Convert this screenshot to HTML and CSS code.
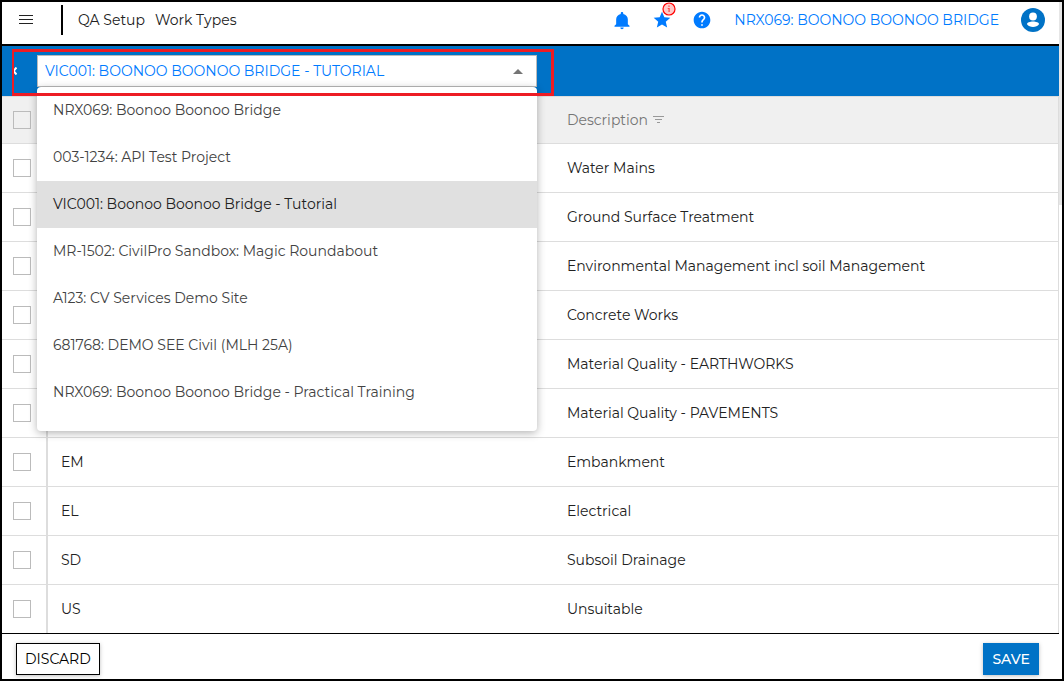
FILE: index.html
```html
<!DOCTYPE html>
<html lang="en">
<head>
    <meta charset="UTF-8">
    <meta name="viewport" content="width=device-width, initial-scale=1.0">
    <title>QA Setup - Work Types</title>
    <link rel="stylesheet" href="styles.css">
</head>
<body>

<div class="app">
    <div class="page">
        <!-- Top bar -->
        <header class="topbar">
            <button type="button" class="icon-btn menu-btn" aria-label="Menu">
                <svg width="14" height="10" viewBox="0 0 14 10" fill="#222" shape-rendering="crispEdges"><path d="M0 0h14v1H0zM0 4h14v1H0zM0 8h14v1H0z"/></svg>
            </button>
            <nav class="breadcrumb">
                <a href="#">QA Setup</a>
                <a href="#">Work Types</a>
            </nav>
            <div class="topbar-right">
                <button type="button" class="icon-btn" aria-label="Notifications">
                    <svg width="20" height="20" viewBox="0 0 24 24" fill="#007bff"><path d="M12 23c1.100 0 2-.9 2-2h-4c0 1.100.9 2 2 2zm7-6v-6c0-3.070-2.130-5.640-5.500-6.320V4c0-.83-.67-1.500-1.500-1.500s-1.500.67-1.500 1.500v.68C7.140 5.360 5 7.920 5 11v6l-2 2v1h18v-1l-2-2z"/></svg>
                </button>
                <button type="button" class="icon-btn" aria-label="Favourites">
                    <svg width="20" height="20" viewBox="0 0 24 24" fill="#007bff"><path d="M12 17.270 18.180 21l-1.640-7.030L22 9.240l-7.190-.61L12 2 9.190 8.630 2 9.240l5.460 4.730L5.820 21z"/></svg>
                    <svg class="badge" width="14" height="14" viewBox="0 0 14 14"><circle cx="7" cy="7" r="6" fill="#ffc9c9" stroke="#f00" stroke-width="1.200"/><path d="M6.300 3.500h1.400v1.300H6.300zM5.700 6h2v4h-1.200V6.900h-.8z" fill="#f44"/></svg>
                </button>
                <button type="button" class="icon-btn" aria-label="Help">
                    <svg width="20" height="20" viewBox="0 0 24 24" fill="#007bff"><path d="M12 2C6.480 2 2 6.480 2 12s4.480 10 10 10 10-4.480 10-10S17.520 2 12 2zm1 17h-2v-2h2v2zm2.070-7.750-.9.920C13.450 12.900 13 13.500 13 15h-2v-.5c0-1.100.45-2.100 1.170-2.830l1.240-1.260c.37-.36.590-.86.590-1.410 0-1.100-.9-2-2-2s-2 .9-2 2H8c0-2.210 1.790-4 4-4s4 1.790 4 4c0 .88-.36 1.680-.93 2.250z"/></svg>
                </button>
                <a href="#" class="project-link">NRX069: BOONOO BOONOO BRIDGE</a>
                <button type="button" class="icon-btn" aria-label="Account">
                    <svg width="24" height="24" viewBox="0 0 24 24"><circle cx="12" cy="12" r="12" fill="#0072c6"/><circle cx="12" cy="8.500" r="3.900" fill="#fff"/><path d="M6 16.300c0-1.800 3-2.700 6-2.700s6 .9 6 2.700c-1.300 1.700-3.500 2.700-6 2.700s-4.700-1-6-2.700z" fill="#fff"/></svg>
                </button>
            </div>
        </header>

        <!-- Project picker -->
        <div class="toolbar">
            <button type="button" class="icon-btn back-btn" aria-label="Back">
                <svg width="5" height="8" viewBox="0 0 5 8" fill="none" stroke="#fff" stroke-width="2"><path d="M4.500.5 1.500 4l3 3.500"/></svg>
            </button>
            <div class="picker">
                <select class="picker-select" aria-label="Project">
                    <option>VIC001: Boonoo Boonoo Bridge - Tutorial</option>
                </select>
                <svg class="picker-arrow" width="10" height="5" viewBox="0 0 10 5" fill="#757575"><path d="M0 5 5 0l5 5z"/></svg>
                <ul class="picker-list">
                    <li>NRX069: Boonoo Boonoo Bridge</li>
                    <li>003-1234: API Test Project</li>
                    <li class="selected">VIC001: Boonoo Boonoo Bridge - Tutorial</li>
                    <li>MR-1502: CivilPro Sandbox: Magic Roundabout</li>
                    <li>A123: CV Services Demo Site</li>
                    <li>681768: DEMO SEE Civil (MLH 25A)</li>
                    <li>NRX069: Boonoo Boonoo Bridge - Practical Training</li>
                </ul>
            </div>
            <div class="highlight"></div>
        </div>

        <!-- Work types -->
        <main class="grid">
            <table class="work-types">
                <colgroup>
                    <col class="col-check">
                    <col class="col-code">
                    <col>
                </colgroup>
                <thead>
                    <tr>
                        <th><input type="checkbox" aria-label="Select all"></th>
                        <th></th>
                        <th>Description <svg class="filter" width="11" height="8" viewBox="0 0 11 8" fill="#999" shape-rendering="crispEdges"><path d="M0 0h11v1H0zM2 3h7v1H2zM4 6h3v1H4z"/></svg></th>
                    </tr>
                </thead>
                <tbody>
                    <tr><td><input type="checkbox" aria-label="Select Water Mains"></td><td></td><td>Water Mains</td></tr>
                    <tr><td><input type="checkbox" aria-label="Select Ground Surface Treatment"></td><td></td><td>Ground Surface Treatment</td></tr>
                    <tr><td><input type="checkbox" aria-label="Select Environmental Management"></td><td></td><td>Environmental Management incl soil Management</td></tr>
                    <tr><td><input type="checkbox" aria-label="Select Concrete Works"></td><td></td><td>Concrete Works</td></tr>
                    <tr><td><input type="checkbox" aria-label="Select Earthworks"></td><td></td><td>Material Quality - EARTHWORKS</td></tr>
                    <tr><td><input type="checkbox" aria-label="Select Pavements"></td><td></td><td>Material Quality - PAVEMENTS</td></tr>
                    <tr><td><input type="checkbox" aria-label="Select Embankment"></td><td>EM</td><td>Embankment</td></tr>
                    <tr><td><input type="checkbox" aria-label="Select Electrical"></td><td>EL</td><td>Electrical</td></tr>
                    <tr><td><input type="checkbox" aria-label="Select Subsoil Drainage"></td><td>SD</td><td>Subsoil Drainage</td></tr>
                    <tr><td><input type="checkbox" aria-label="Select Unsuitable"></td><td>US</td><td>Unsuitable</td></tr>
                </tbody>
            </table>
        </main>

        <footer class="actions">
            <button type="button" class="btn">DISCARD</button>
            <button type="button" class="btn btn-primary">SAVE</button>
        </footer>
    </div>
    <div class="scrollbar"><div class="scrollbar-thumb"></div></div>
</div>

</body>
</html>
```
FILE: styles.css
```css
* {
    box-sizing: border-box;
}

body {
    margin: 0;
    font-family: Montserrat, Inter, sans-serif;
    font-size: 14px;
    line-height: 20px;
    color: #212121;
    background: #fff;
}

button,
select {
    font: inherit;
}

.app {
    display: flex;
    height: 100vh;
    border: 2px solid #000;
    overflow: hidden;
}

.page {
    flex: 1;
    min-width: 0;
    display: flex;
    flex-direction: column;
}

.scrollbar {
    width: 3px;
}

.scrollbar-thumb {
    height: 30%;
    background: #e6e6e6;
}

.icon-btn {
    display: flex;
    position: relative;
    padding: 0;
    border: none;
    background: none;
    cursor: pointer;
}

/* Top bar */
.topbar {
    flex: none;
    display: flex;
    align-items: center;
    height: 44px;
    padding: 0 14px 6px 17px;
    border-bottom: 2px solid #000;
}

.breadcrumb {
    display: flex;
    align-items: center;
    gap: 10px;
    height: 30px;
    margin-left: 28px;
    padding-left: 15px;
    border-left: 2px solid #000;
}

.breadcrumb a {
    color: #212121;
    text-decoration: none;
}

.topbar-right {
    display: flex;
    align-items: center;
    gap: 20px;
    margin-left: auto;
}

.badge {
    position: absolute;
    top: -8px;
    right: -4px;
}

.project-link {
    padding: 0 2px;
    color: #007bff;
    text-decoration: none;
}

/* Project picker */
.toolbar {
    flex: none;
    position: relative;
    display: flex;
    align-items: center;
    height: 50px;
    padding-left: 10px;
    background: #0072c6;
}

.back-btn {
    width: 25px;
}

.picker {
    position: relative;
    width: 500px;
}

.picker-select {
    display: block;
    width: 100%;
    height: 32px;
    padding: 0 7px;
    border: 1px solid #bbb;
    border-radius: 0;
    appearance: none;
    background: #fff;
    color: #007bff;
    text-transform: uppercase;
}

.picker-arrow {
    position: absolute;
    top: 14px;
    right: 14px;
}

.picker-list {
    position: absolute;
    top: 100%;
    left: 0;
    right: 0;
    z-index: 1;
    margin: 0;
    padding: 0 0 15px;
    list-style: none;
    background: #fff;
    border-radius: 4px;
    box-shadow: 0 2px 8px rgba(0, 0, 0, 0.3);
    color: #424242;
}

.picker-list li {
    height: 47px;
    padding: 0 16px;
    line-height: 47px;
}

.picker-list .selected {
    background: #e0e0e0;
    color: #212121;
}

.highlight {
    position: absolute;
    top: 3px;
    left: 10px;
    z-index: 2;
    width: 542px;
    height: 47px;
    border: 3px solid #ed1c24;
    border-left-width: 2px;
    pointer-events: none;
}

/* Work types */
.grid {
    flex: 1;
    min-height: 0;
    overflow: hidden;
    border-right: 1px solid #ddd;
}

.work-types {
    width: 100%;
    table-layout: fixed;
    border-collapse: separate;
    border-spacing: 0;
}

.col-check {
    width: 46px;
}

.col-code {
    width: 48%;
}

.work-types th,
.work-types td {
    height: 49px;
    padding: 0 12px;
    border-bottom: 1px solid #ddd;
    text-align: left;
    font-weight: 400;
}

.work-types td:nth-child(2) {
    padding-left: 13px;
}

.work-types th {
    height: 48px;
    border-top: 1px solid #ddd;
    background: #f0f0f0;
    color: #757575;
}

.work-types th:first-child,
.work-types td:first-child {
    padding: 0 0 0 11px;
    border-right: 2px solid #ddd;
}

.work-types input {
    display: block;
    width: 18px;
    height: 18px;
    margin: 0;
    border: 1px solid #bbb;
    appearance: none;
}

.filter {
    margin-left: 1px;
    vertical-align: 1px;
}

/* Footer */
.actions {
    flex: none;
    display: flex;
    align-items: center;
    justify-content: space-between;
    height: 46px;
    padding: 5px 20px 0 14px;
    border-top: 1px solid #000;
}

.btn {
    height: 32px;
    padding: 0 8px;
    border: 1px solid #000;
    background: #fff;
    color: #000;
    box-shadow: 0 1px 4px rgba(0, 0, 0, 0.25);
    cursor: pointer;
}

.btn-primary {
    border-color: #0072c6;
    background: #0072c6;
    color: #fff;
    font-weight: 500;
}
```
